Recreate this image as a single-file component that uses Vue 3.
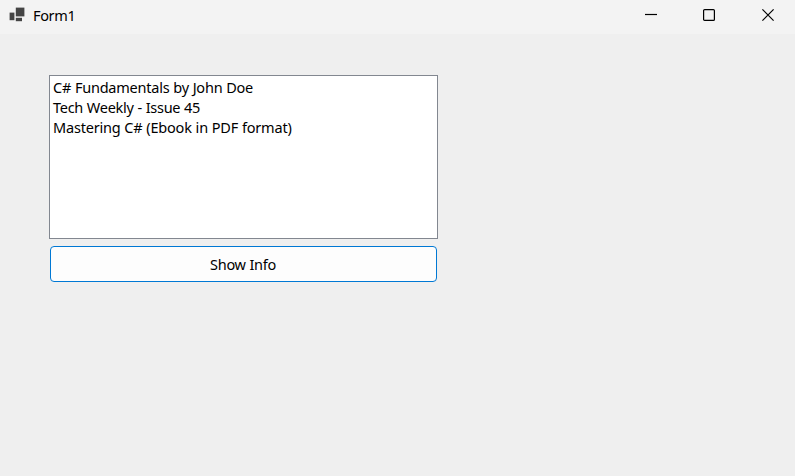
<script setup>
import { ref } from 'vue'

const items = [
  { text: 'C# Fundamentals by John Doe', tone: 'first' },
  { text: 'Tech Weekly - Issue 45', tone: 'second' },
  { text: 'Mastering C# (Ebook in PDF format)', tone: 'third' }
]
const selected = ref(-1)
</script>

<template>
  <div class="window">
    <header class="titlebar">
      <svg class="app-icon" width="16" height="16" viewBox="0 0 16 16">
        <rect x="6.8" y="0.6" width="8.6" height="8.8" fill="#444" />
        <rect x="0.6" y="5.6" width="4.8" height="7.6" fill="#444" />
        <rect x="6.8" y="10.8" width="6.2" height="3.4" fill="#444" />
      </svg>
      <h1 class="title">Form1</h1>
      <div class="controls">
        <button class="control" aria-label="Minimize">
          <svg width="12" height="12" viewBox="0 0 12 12"><path d="M0 5.5H12" /></svg>
        </button>
        <button class="control" aria-label="Maximize">
          <svg width="12" height="12" viewBox="0 0 12 12"><rect x="0.6" y="0.6" width="10.8" height="10.8" rx="1" /></svg>
        </button>
        <button class="control" aria-label="Close">
          <svg width="12" height="12" viewBox="0 0 12 12"><path d="M0.4 0.4L11.6 11.6M11.6 0.4L0.4 11.6" /></svg>
        </button>
      </div>
    </header>
    <main class="form">
      <ul class="listbox">
        <li v-for="(item, i) in items" :key="i" class="item" :class="item.tone" @click="selected = i">{{ item.text }}</li>
      </ul>
      <button class="show">Show Info</button>
    </main>
  </div>
</template>

<style>
body { margin: 0; background: #efefef; }
</style>

<style scoped>
.window {
  height: 476px;
  display: flex;
  flex-direction: column;
  background: #efefef;
  color: #000;
  font-family: "Noto Sans", "Open Sans", sans-serif;
  font-size: 14.5px;
  overflow: hidden;
}
.titlebar {
  height: 34px;
  display: flex;
  align-items: flex-start;
  background: #f3f3f3;
  box-sizing: border-box;
  padding-left: 9px;
}
.app-icon { margin-top: 7px; }
.title {
  margin: 0 0 0 8px;
  font-size: 14.5px;
  font-weight: 400;
  line-height: 31px;
  letter-spacing: -0.35px;
}
.controls { display: flex; margin-left: auto; margin-right: -2px; }
.control {
  width: 58.5px;
  height: 30px;
  padding: 0;
  border: 0;
  background: transparent;
  display: flex;
  align-items: center;
  justify-content: center;
}
.control svg { fill: none; stroke: #000; stroke-width: 1.2; }
.form { padding: 41px 49px 0; }
.listbox {
  box-sizing: border-box;
  width: 389px;
  height: 164px;
  margin: 0;
  padding: 1px 3px;
  list-style: none;
  border: 1px solid #828790;
  background: #fff;
}
.item { height: 20px; line-height: 20px; white-space: nowrap; word-spacing: 0.3px; }
.first { letter-spacing: -0.23px; }
.second { letter-spacing: -0.27px; }
.third { letter-spacing: -0.2px; }
.show {
  display: block;
  box-sizing: border-box;
  width: 387px;
  height: 36px;
  margin: 7px 0 0 1px;
  padding: 0 1px 0 0;
  border: 1px solid #0078d4;
  border-radius: 4px;
  background: #fdfdfd;
  color: #000;
  font: inherit;
  letter-spacing: -0.3px;
  word-spacing: 0.3px;
}
</style>
